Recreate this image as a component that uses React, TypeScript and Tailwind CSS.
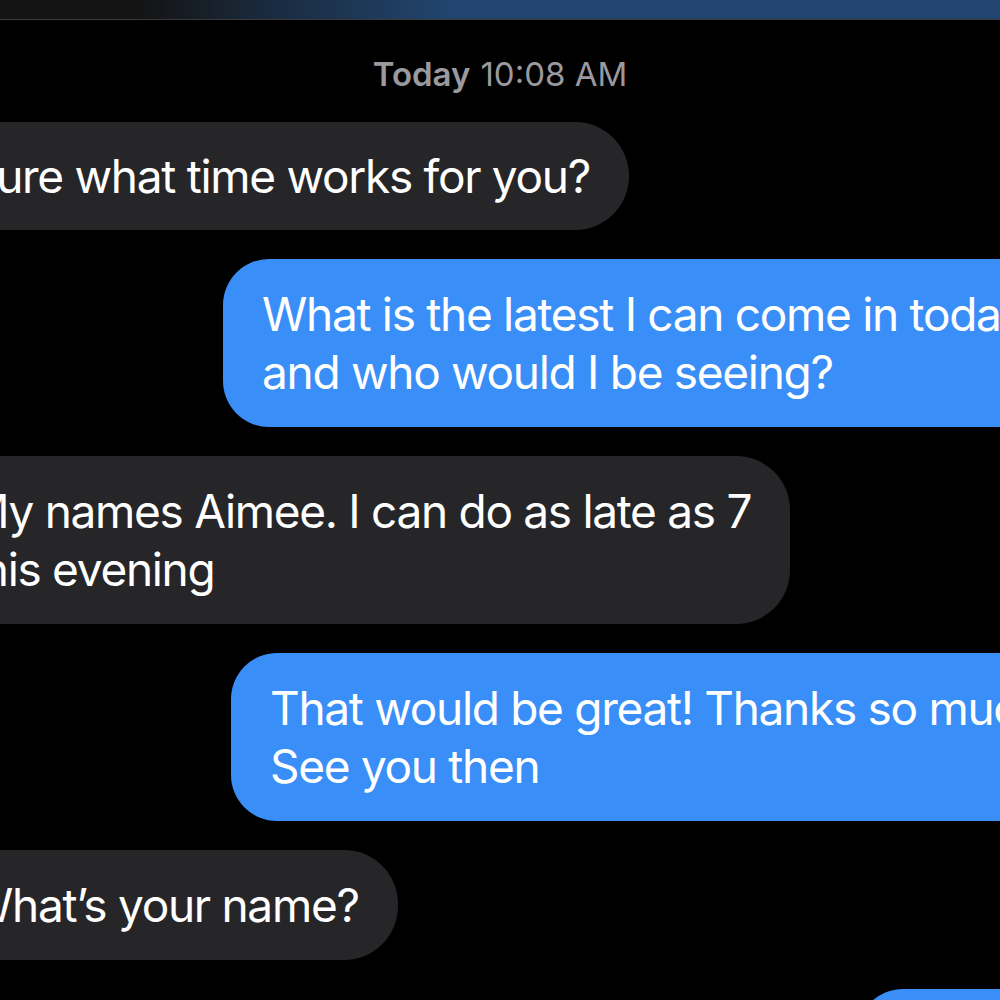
import React from "react";

const font = { fontFamily: "Inter, 'Noto Sans', sans-serif" };

function Gray({ lines, py }: { lines: string[]; py: string }) {
  return (
    <div className="flex">
      <div
        className={`-ml-[72px] rounded-[54px] bg-[#262629] pl-[40px] pr-[39px] ${py} text-[46px] leading-[58px] tracking-[-1.3px] text-white whitespace-nowrap`}
      >
        {lines.map((l, i) => (
          <div key={i}>{l}</div>
        ))}
      </div>
    </div>
  );
}

function Blue({ lines, ml, py }: { lines: string[]; ml: string; py: string }) {
  return (
    <div className="flex">
      <div
        className={`${ml} shrink-0 rounded-l-[46px] bg-[#3a8ef7] pl-[39px] pr-[60px] ${py} text-[46px] leading-[58px] tracking-[-1.3px] text-white whitespace-nowrap`}
      >
        {lines.map((l, i) => (
          <div key={i}>{l}</div>
        ))}
      </div>
    </div>
  );
}

export default function App() {
  return (
    <div className="w-[1000px] h-[1000px] overflow-hidden bg-black" style={font}>
      <div className="h-[19px] bg-linear-to-r from-[#141414] from-[14%] via-[#1a2c42] via-[28%] to-[#21456e] to-[45%]" />
      <div className="h-px bg-[#3a3a3c]" />
      <div className="flex flex-col">
        <div className="flex justify-center pt-[36px] pb-[30px] text-[33px] leading-[36px] text-[#99999e]">
          <span className="font-semibold">Today</span>
          <span className="ml-[10px]">10:08 AM</span>
        </div>
        <div className="flex flex-col gap-[29px]">
          <Gray lines={["Sure what time works for you?"]} py="py-[25px]" />
          <Blue
            ml="ml-[223px]"
            py="py-[26px]"
            lines={["What is the latest I can come in today?", "and who would I be seeing?"]}
          />
          <Gray
            lines={["My names Aimee. I can do as late as 7", "this evening"]}
            py="py-[26px]"
          />
          <Blue
            ml="ml-[231px]"
            py="py-[26px]"
            lines={["That would be great! Thanks so much!", "See you then"]}
          />
          <Gray lines={["What\u2019s your name?"]} py="py-[26px]" />
          <Blue ml="ml-[857px]" py="py-[25px]" lines={["Great"]} />
        </div>
      </div>
    </div>
  );
}
